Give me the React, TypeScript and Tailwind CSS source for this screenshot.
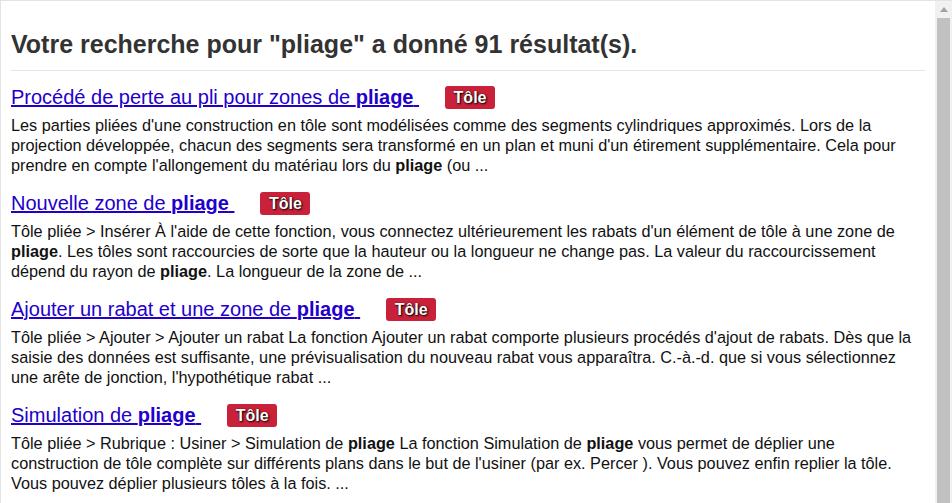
import { Fragment } from 'react'

type Result = {
  title: string
  body: (string | { b: string })[]
}

const results: Result[] = [
  {
    title: 'Procédé de perte au pli pour zones de ',
    body: [
      "Les parties pliées d'une construction en tôle sont modélisées comme des segments cylindriques approximés. Lors de la projection développée, chacun des segments sera transformé en un plan et muni d'un étirement supplémentaire. Cela pour prendre en compte l'allongement du matériau lors du ",
      { b: 'pliage' },
      ' (ou ...',
    ],
  },
  {
    title: 'Nouvelle zone de ',
    body: [
      "Tôle pliée > Insérer À l'aide de cette fonction, vous connectez ultérieurement les rabats d'un élément de tôle à une zone de ",
      { b: 'pliage' },
      '. Les tôles sont raccourcies de sorte que la hauteur ou la longueur ne change pas. La valeur du raccourcissement dépend du rayon de ',
      { b: 'pliage' },
      '. La longueur de la zone de ...',
    ],
  },
  {
    title: 'Ajouter un rabat et une zone de ',
    body: [
      "Tôle pliée > Ajouter > Ajouter un rabat La fonction Ajouter un rabat comporte plusieurs procédés d'ajout de rabats. Dès que la saisie des données est suffisante, une prévisualisation du nouveau rabat vous apparaîtra. C.-à.-d. que si vous sélectionnez une arête de jonction, l'hypothétique rabat ...",
    ],
  },
  {
    title: 'Simulation de ',
    body: [
      'Tôle pliée > Rubrique : Usiner > Simulation de ',
      { b: 'pliage' },
      ' La fonction Simulation de ',
      { b: 'pliage' },
      " vous permet de déplier une construction de tôle complète sur différents plans dans le but de l'usiner (par ex. Percer ). Vous pouvez enfin replier la tôle. Vous pouvez déplier plusieurs tôles à la fois. ...",
    ],
  },
]

function ResultItem({ r }: { r: Result }) {
  return (
    <div className="mb-[16px]">
      <div className="flex items-center h-[24px]">
        <a href="#" className="text-[20px] leading-[24px] text-[#2200cc] underline whitespace-pre">
          {r.title}
          <b>pliage</b>
          {'\u00a0'}
        </a>
        <span className="ml-[26px] w-[50px] text-center bg-[#c9213a] text-white font-bold text-[16px] leading-[23px] rounded-[3px] [text-shadow:1px_1px_2px_#000,0_0_1px_#000]">
          Tôle
        </span>
      </div>
      <p className="mt-[6px] text-[16.25px] leading-[20px] text-[#111]">
        {r.body.map((part, i) =>
          typeof part === 'string' ? (
            <Fragment key={i}>{part}</Fragment>
          ) : (
            <b key={i}>{part.b}</b>
          ),
        )}
      </p>
    </div>
  )
}

export default function App() {
  return (
    <div className="flex h-[503px] w-[952px] overflow-hidden bg-white font-['Liberation_Sans',Arial,sans-serif] border-t border-l border-[#e3e3e3]">
      <div className="flex-1 px-[10px]">
        <h1 className="mt-[28px] text-[25px] leading-[30px] font-bold text-[#333]">
          Votre recherche pour "pliage" a donné 91 résultat(s).
        </h1>
        <div className="mt-[11px] mb-[14px] border-t border-[#e8e8e8]" />
        {results.map((r, i) => (
          <ResultItem key={i} r={r} />
        ))}
      </div>
      <div className="w-[17px] bg-[#f1f1f1] flex flex-col items-center">
        <div className="h-[17px] flex items-center justify-center">
          <svg width="8" height="5" viewBox="0 0 8 5">
            <path d="M0 5 L4 0 L8 5 Z" fill="#a3a3a3" />
          </svg>
        </div>
        <div className="flex-1 w-[13px] bg-[#c1c1c1]" />
      </div>
    </div>
  )
}
